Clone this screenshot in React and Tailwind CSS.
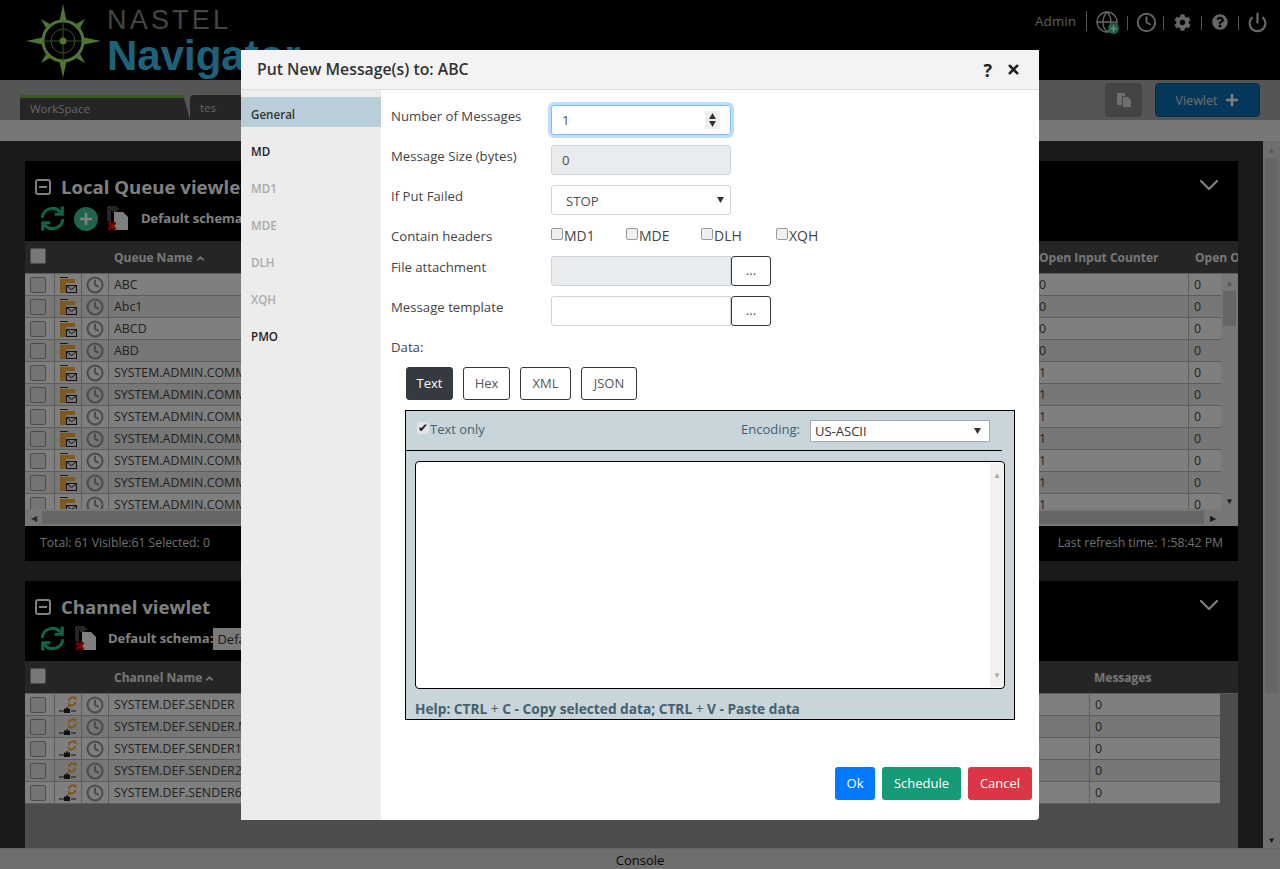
import React from "react";
import { Clock, Power, Globe, ChevronDown, ChevronUp, X, Plus } from "lucide-react";
import { FaCog, FaQuestionCircle, FaPlus } from "react-icons/fa";

const FONT = { fontFamily: '"Open Sans", "Noto Sans", sans-serif' };

const queueRows = [
  ["ABC", "0"],
  ["Abc1", "0"],
  ["ABCD", "0"],
  ["ABD", "0"],
  ["SYSTEM.ADMIN.COMMAND.EVENT", "1"],
  ["SYSTEM.ADMIN.COMMAND.QUEUE", "1"],
  ["SYSTEM.ADMIN.COMMAND.REPLY", "1"],
  ["SYSTEM.ADMIN.COMMAND.STATS", "1"],
  ["SYSTEM.ADMIN.COMMAND.TRACE", "1"],
  ["SYSTEM.ADMIN.COMMAND.ROUTE", "1"],
  ["SYSTEM.ADMIN.COMMAND.INPUT", "1"],
];

const channelRows = [
  "SYSTEM.DEF.SENDER",
  "SYSTEM.DEF.SENDER.MQ",
  "SYSTEM.DEF.SENDER1",
  "SYSTEM.DEF.SENDER2",
  "SYSTEM.DEF.SENDER6",
];

function Compass() {
  return (
    <svg width="78" height="76" viewBox="0 0 78 76">
      <g fill="#9ee86a">
        <path d="M38 1l5 24h-10z" />
        <path d="M38 75l-5-24h10z" />
        <path d="M1 38l24-5v10z" />
        <path d="M76 38l-24 5v-10z" />
        <path d="M16 16l9 5-4 4z" />
        <path d="M60 16l-5 9-4-4z" />
        <path d="M16 60l5-9 4 4z" />
        <path d="M60 60l-9-5 4-4z" />
      </g>
      <circle cx="38" cy="38" r="20" fill="#000" stroke="#9ee86a" strokeWidth="3" />
      <circle cx="38" cy="38" r="12" fill="none" stroke="#6aa84a" strokeWidth="1" />
      <path d="M38 18v40M18 38h40" stroke="#6aa84a" strokeWidth="1" />
      <circle cx="38" cy="38" r="3.5" fill="#9ee86a" />
    </svg>
  );
}

function RefreshIcon() {
  return (
    <svg width="25" height="25" viewBox="1 1 23 23" fill="none" stroke="#1fc98c" strokeWidth="2.8">
      <path d="M3 12a9.5 9.5 0 0 1 17-5" />
      <path d="M22 13a9.5 9.5 0 0 1-17 5" />
      <path d="M21.5 1.5v7h-7" />
      <path d="M3.5 23.5v-7h7" />
    </svg>
  );
}

function PlusCircle() {
  return (
    <div className="flex h-6 w-6 items-center justify-center rounded-full bg-[#44c79c]">
      <FaPlus className="text-[14px] text-white" />
    </div>
  );
}

function ClearFiles() {
  return (
    <svg width="22" height="25" viewBox="0 0 22 25">
      <path d="M1 1h9M1 1v14M3 3h9M3 3v13M5 5h5" stroke="#999" strokeWidth="1" fill="none" />
      <path d="M7 6h9l5 5v13H7z" fill="#fff" />
      <path d="M1.5 16.5l7 7M8.5 16.5l-7 7" stroke="#f00" strokeWidth="3" />
    </svg>
  );
}

function FolderMail() {
  return (
    <svg width="18" height="18" viewBox="0 0 18 18">
      <path d="M1 1h8v1H1z" fill="#333" />
      <path d="M1 3h15v4H7v10H1z" fill="#ffb13b" />
      <rect x="7.5" y="9.5" width="10" height="7" fill="#eee" stroke="#222" />
      <path d="M8 10l4.5 3.5L17 10" fill="none" stroke="#222" />
    </svg>
  );
}

function ChannelIcon() {
  return (
    <svg width="18" height="18" viewBox="0 0 18 18">
      <path d="M8 11v4M0 15h5M12 15h5" stroke="#222" strokeWidth="1.2" />
      <rect x="5" y="12.5" width="6" height="4.5" fill="#222" />
      <path d="M9.5 5a4 4 0 0 1 6.5-2.5M16.5 6a4 4 0 0 1-6.5 2.5" fill="none" stroke="#ffb13b" strokeWidth="2" />
      <path d="M13 0.5h4.5v4.5zM13.5 10.5H9V6z" fill="#ffb13b" />
    </svg>
  );
}

function RowClock() {
  return <Clock size={18} strokeWidth={2.8} className="text-[#999]" />;
}

function Check({ header }) {
  return (
    <div className={`h-4 w-4 rounded-[2px] border border-[#999] ${header ? "bg-[#f0f0f0]" : "bg-[#e8e8e8]"}`} />
  );
}

function TableHeader({ label, children }) {
  return (
    <div className="flex h-[33px] shrink-0 border-b border-[#bbb] bg-[#4a4a4a] text-[12px] font-bold text-[#eee]">
      <div className="w-[30px] pl-[5px] pt-[7px]">
        <Check header />
      </div>
      <div className="w-[54px]" />
      <div className="flex flex-1 items-start gap-[2px] pl-[5px] pt-[8px]">
        {label}
        <ChevronUp size={11} strokeWidth={3.5} className="mt-[4px]" />
      </div>
      {children}
    </div>
  );
}

function Row({ index, icon, name, children }) {
  return (
    <div className={`flex h-[22px] shrink-0 border-b border-[#bbb] text-[12.4px] text-[#444] ${index % 2 ? "bg-[#eee]" : "bg-white"}`}>
      <div className="flex w-[30px] items-center border-r border-[#bbb] pl-[5px]">
        <Check />
      </div>
      <div className="flex w-[27px] items-center justify-center border-r border-[#bbb]">{icon}</div>
      <div className="flex w-[27px] items-center justify-center border-r border-[#bbb]">
        <RowClock />
      </div>
      <div className="flex-1 truncate pl-[5px] leading-[22px]">{name}</div>
      {children}
    </div>
  );
}

function ViewletHead({ title, first }) {
  return (
    <div className="h-[80px] shrink-0 bg-black pl-[10px] pr-[13px]">
      <div className="flex h-[45px] items-center gap-[10px] pt-[7px]">
        <div className="flex h-4 w-4 items-center justify-center rounded-[3px] border-2 border-white">
          <div className="h-[2px] w-2 bg-white" />
        </div>
        <div className="text-[18.6px] font-bold leading-none text-white">{title}</div>
        <div className="flex-1" />
        <ChevronDown size={32} strokeWidth={1.6} className="-mt-[4px] text-white" />
      </div>
      <div className={`flex items-center pl-[5px] ${first ? "gap-[9px]" : "gap-[10px]"}`}>
        <RefreshIcon />
        {first && <PlusCircle />}
        <ClearFiles />
        <div className={`text-[13px] font-bold text-white ${first ? "ml-[3px]" : "ml-[1px]"}`}>Default schema:</div>
        {!first && <div className="-ml-[10px] h-[22px] w-[60px] bg-[#f4f4f4] pl-1 text-[13px] leading-[22px] text-[#333]">Default</div>}
      </div>
    </div>
  );
}

function Background() {
  return (
    <div className="flex h-full flex-col bg-[#343434]">
      {/* Top bar */}
      <div className="flex h-[80px] shrink-0 bg-black">
        <div className="pl-[25px] pt-[3px]">
          <Compass />
        </div>
        <div className="pl-[4px]" style={{ fontFamily: '"Liberation Sans", sans-serif' }}>
          <div className="pt-[7px] text-[27px] leading-[27px] tracking-[3.2px] text-[#8a8a8a]">NASTEL</div>
          <div className="text-[42px] font-bold leading-[44px] text-[#3cc4f5]">Navigator</div>
        </div>
        <div className="flex-1" />
        <div className="flex items-start gap-[10px] pr-[14px] pt-[11px] text-white">
          <span className="text-[13.5px] leading-[21px] text-[#bbb]">Admin</span>
          <div className="h-5 w-px bg-[#aaa]" />
          <div className="relative -mx-[2px] -mt-[1px] h-6 w-6">
            <Globe size={24} strokeWidth={1.3} className="text-[#ccc]" />
            <div className="absolute bottom-0 right-0 flex h-[11px] w-[11px] items-center justify-center rounded-full bg-[#39c98f]">
              <Plus size={9} strokeWidth={4} className="text-white" />
            </div>
          </div>
          <div className="mt-[5px] h-[14px] w-px bg-[#aaa]" />
          <Clock size={21} strokeWidth={2.2} className="-ml-[2px] -mr-[4px] mt-[1px] text-[#ccc]" />
          <div className="mt-[5px] h-[14px] w-px bg-[#aaa]" />
          <FaCog className="mt-[3px] text-[17px] text-[#ccc]" />
          <div className="mt-[5px] h-[14px] w-px bg-[#aaa]" />
          <FaQuestionCircle className="mt-[3px] text-[16px] text-[#ccc]" />
          <div className="mt-[5px] h-[14px] w-px bg-[#aaa]" />
          <Power size={21} strokeWidth={2.6} className="-mx-[2px] mt-[1px] text-[#ccc]" />
        </div>
      </div>

      {/* Tabs */}
      <div className="flex h-[40px] shrink-0 bg-[#aaa] pl-[20px] pr-[20px]">
        <div className="mt-[15px] flex h-[25px] w-[170px] items-center border-t-[3px] border-[#6fb83c] bg-[#4a4a4a] pl-[10px] text-[11.5px] text-[#ccc] [clip-path:polygon(0_0,96%_0,100%_100%,0_100%)]">
          WorkSpace
        </div>
        <div className="mt-[15px] flex h-[25px] w-[120px] items-center rounded-tl-[4px] bg-[#4a4a4a] pl-[10px] text-[11.5px] text-[#ccc]">
          tes
        </div>
        <div className="flex-1" />
        <div className="mt-[3px] flex h-[34px] w-[37px] items-center justify-center rounded-[4px] bg-[#888]">
          <svg width="16" height="16" viewBox="0 0 16 16">
            <path d="M1 1h8v3H6v9H1z" fill="#ddd" />
            <path d="M7 5h5l3 3v7H7z" fill="#ddd" />
          </svg>
        </div>
        <div className="ml-[13px] mt-[3px] flex h-[34px] w-[105px] items-center justify-center gap-2 rounded-[4px] border border-[#0a5c94] bg-[#0b6fb4] text-[12.5px] text-[#ddd]">
          <span className="pt-[3px]">Viewlet</span> <FaPlus className="text-[14px] text-white" />
        </div>
      </div>
      <div className="h-[21px] shrink-0 bg-[#eee]" />

      {/* Viewlets */}
      <div className="flex min-h-0 flex-1">
        <div className="flex min-w-0 flex-1 flex-col pl-[25px] pr-[25px] pt-[20px]">
          <div className="flex h-[400px] shrink-0 flex-col">
            <ViewletHead title="Local Queue viewlet" first />
            <TableHeader label="Queue Name">
              <div className="w-[156px] pl-[6px] pt-[8px]">Open Input Counter</div>
              <div className="w-[49px] overflow-hidden whitespace-nowrap pl-[6px] pt-[8px]">Open Output</div>
            </TableHeader>
            <div className="flex min-h-0 flex-1">
              <div className="flex min-w-0 flex-1 flex-col">
                <div className="h-[235px] overflow-hidden">
                  {queueRows.map(([name, count], i) => (
                    <Row key={name} index={i} icon={<FolderMail />} name={name}>
                      <div className="w-[156px] border-r border-[#bbb] pl-[6px] leading-[22px]">{count}</div>
                      <div className="w-[32px] pl-[5px] leading-[22px]">0</div>
                    </Row>
                  ))}
                </div>
                <div className="flex h-[17px] items-center bg-[#eee]">
                  <div className="w-[17px] text-center text-[8px] text-[#555]">◀</div>
                  <div className="h-[13px] flex-1 bg-[#ccc]" />
                  <div className="w-[17px] text-center text-[8px] text-[#333]">▶</div>
                </div>
              </div>
              <div className="flex w-[17px] flex-col bg-[#eee]">
                <div className="h-[17px] text-center text-[8px] leading-[17px] text-[#aaa]">▲</div>
                <div className="mx-[2px] h-[35px] bg-[#ccc]" />
                <div className="flex-1" />
                <div className="mb-[17px] h-[17px] text-center text-[8px] leading-[17px] text-[#333]">▼</div>
              </div>
            </div>
            <div className="flex h-[35px] shrink-0 items-center justify-between bg-black pl-[15px] pr-[15px] text-[12.2px] text-[#ddd]">
              <div>Total: 61 Visible:61 Selected: 0</div>
              <div>Last refresh time: 1:58:42 PM</div>
            </div>
          </div>

          <div className="mt-[20px] flex min-h-0 flex-1 flex-col bg-[#999]">
            <ViewletHead title="Channel viewlet" />
            <TableHeader label="Channel Name">
              <div className="w-[131px] pl-[5px] pt-[8px]">Messages</div>
              <div className="w-[18px]" />
            </TableHeader>
            <div className="w-[1195px]">
              {channelRows.map((name, i) => (
                <Row key={name} index={i} icon={<ChannelIcon />} name={name}>
                  <div className="w-[131px] border-l border-[#bbb] pl-[5px] leading-[22px]">0</div>
                </Row>
              ))}
            </div>
          </div>
        </div>
        <div className="flex w-[17px] shrink-0 flex-col bg-[#ddd]">
          <div className="h-[17px] text-center text-[8px] leading-[17px] text-[#aaa]">▲</div>
          <div className="mx-[2px] h-[535px] bg-[#ccc]" />
          <div className="flex-1" />
          <div className="h-[17px] text-center text-[8px] leading-[17px] text-[#333]">▼</div>
        </div>
      </div>

      <div className="h-[21px] shrink-0 border-t border-[#ccc] bg-[#ddd] text-center text-[13px] leading-[22px] text-[#111]">
        Console
      </div>
    </div>
  );
}

function SideItem({ label, active, disabled }) {
  let tone = "text-[#222]";
  if (active) tone = "bg-[#b9ced8] text-[#333]";
  if (disabled) tone = "text-[#aaa]";
  return (
    <div className={`flex h-[30px] items-center pl-[10px] pt-[5px] text-[11.6px] font-semibold ${tone}`}>{label}</div>
  );
}

function FormRow({ label, height = "h-[40px]", flat, children }) {
  return (
    <div className={`flex ${height} text-[13.2px] text-[#444]`}>
      <div className={`w-[160px] shrink-0 ${flat ? "" : "pt-[2px]"}`}>{label}</div>
      {children}
    </div>
  );
}

function Triangle({ className }) {
  return (
    <svg width="7" height="6" viewBox="0 0 7 6" className={className}>
      <path d="M0 0h7L3.5 6z" fill="#333" />
    </svg>
  );
}

function ModeButton({ label, active, width }) {
  return (
    <div
      className={`flex h-[33px] items-center justify-center rounded-[3px] border border-[#343a40] text-[13px] ${width} ${
        active ? "bg-[#343a40] text-white" : "bg-white text-[#555]"
      }`}
    >
      {label}
    </div>
  );
}

function Modal() {
  return (
    <div className="absolute left-[241px] top-[50px] flex h-[770px] w-[798px] flex-col rounded-b-[4px] bg-white text-[#333]">
      <div className="flex h-[40px] shrink-0 items-center border-b border-[#ddd] bg-[#f3f3f3] pl-[16px] pr-[18px]">
        <div className="flex-1 text-[15.8px] font-semibold text-[#333]">Put New Message(s) to: ABC</div>
        <div className="mr-[14px] text-[18px] font-bold leading-none text-[#222]">?</div>
        <X size={15} strokeWidth={4} className="text-[#222]" />
      </div>
      <div className="flex min-h-0 flex-1">
        <div className="flex w-[140px] shrink-0 flex-col gap-[7px] bg-[#ececec] pt-[7px]">
          <SideItem label="General" active />
          <SideItem label="MD" />
          <SideItem label="MD1" disabled />
          <SideItem label="MDE" disabled />
          <SideItem label="DLH" disabled />
          <SideItem label="XQH" disabled />
          <SideItem label="PMO" />
        </div>

        <div className="flex min-w-0 flex-1 flex-col pl-[10px] pt-[15px] pr-[7px]">
          <FormRow label="Number of Messages">
            <div className="flex h-[30px] w-[180px] items-center justify-between rounded-[3px] border border-[#80bdff] pl-[10px] pr-[10px] text-[#495057] shadow-[0_0_0_3px_rgba(0,123,255,0.25)]">
              <span className="pt-[1px]">1</span>
              <div className="flex h-[18px] w-[15px] flex-col items-center justify-center gap-[2px] bg-[#f0f0f0]">
                <Triangle className="rotate-180" />
                <Triangle />
              </div>
            </div>
          </FormRow>
          <FormRow label="Message Size (bytes)">
            <div className="flex h-[30px] w-[180px] items-center rounded-[3px] border border-[#ced4da] bg-[#e9ecef] pl-[10px] pt-[1px] text-[#495057]">0</div>
          </FormRow>
          <FormRow label="If Put Failed" height="h-[42px]">
            <div className="flex h-[30px] w-[180px] items-center justify-between rounded-[3px] border border-[#ced4da] pl-[14px] pr-[6px] text-[#495057]">
              <span className="pt-[3px]">STOP</span>
              <Triangle />
            </div>
          </FormRow>
          <FormRow label="Contain headers" height="h-[29px]" flat>
            {["MD1", "MDE", "DLH", "XQH"].map((h) => (
              <div key={h} className="flex h-[20px] w-[75px] items-start">
                <div className="mt-[1px] h-3 w-3 shrink-0 rounded-[2px] border border-[#999] bg-[#f0f0f0]" />
                <span className="pl-[1px] text-[14px] leading-[18px]">{h}</span>
              </div>
            ))}
          </FormRow>
          <FormRow label="File attachment">
            <div className="h-[30px] w-[180px] rounded-l-[3px] border border-[#ced4da] bg-[#e9ecef]" />
            <div className="flex h-[30px] w-[40px] items-center justify-center rounded-[3px] border border-[#343a40] text-[#555]">...</div>
          </FormRow>
          <FormRow label="Message template">
            <div className="h-[30px] w-[180px] rounded-l-[3px] border border-[#ced4da]" />
            <div className="flex h-[30px] w-[40px] items-center justify-center rounded-[3px] border border-[#343a40] text-[#555]">...</div>
          </FormRow>
          <div className="h-[31px] pt-[2px] text-[13.2px] text-[#444]">Data:</div>

          <div className="flex gap-[10px] pl-[15px]">
            <ModeButton label="Text" active width="w-[47px]" />
            <ModeButton label="Hex" width="w-[47px]" />
            <ModeButton label="XML" width="w-[51px]" />
            <ModeButton label="JSON" width="w-[56px]" />
          </div>

          <div className="ml-[14px] mt-[10px] flex h-[310px] w-[610px] flex-col border border-black bg-[#c8d6db] px-[9px]">
            <div className="-ml-[9px] mr-[3px] flex h-[40px] shrink-0 items-start justify-between border-b border-black pl-[11px] pr-[12px] pt-[9px] text-[13px] text-[#45606e]">
              <div className="flex items-center">
                <div className="-mt-[3px] flex h-3 w-3 items-center justify-center rounded-[2px] bg-[#e4e4e4] text-[12px] leading-none text-[#222]">✔</div>
                <span className="pl-[1px] leading-[18px]">Text only</span>
              </div>
              <div className="flex items-start gap-[10px]">
                <span className="leading-[18px]">Encoding:</span>
                <div className="flex h-[22px] w-[180px] items-center justify-between border border-[#aaa] bg-white pl-[4px] pr-[8px] text-[#333]">
                  <span className="pt-[1px]">US-ASCII</span>
                  <Triangle />
                </div>
              </div>
            </div>
            <div className="mt-[10px] flex h-[228px] shrink-0 justify-end rounded-[4px] border border-black bg-white">
              <div className="my-[1px] flex w-[14px] flex-col justify-between rounded-r-[4px] bg-[#f1f1f1] py-[6px] text-center text-[8px] text-[#aaa]">
                <span>▲</span>
                <span>▼</span>
              </div>
            </div>
            <div className="whitespace-nowrap pt-[12px] text-[13.7px] font-bold leading-[16px] text-[#45606e]">
              Help: CTRL <span className="font-normal">+</span> C - Copy selected data; CTRL <span className="font-normal">+</span> V - Paste data
            </div>
          </div>

          <div className="flex flex-1 items-start justify-end gap-[7px] pt-[47px] text-[13px] text-white">
            <div className="flex h-[33px] w-[40px] items-center justify-center rounded-[3px] bg-[#007bff] pt-[1px]">Ok</div>
            <div className="flex h-[33px] w-[79px] items-center justify-center rounded-[3px] bg-[#169b78] pt-[1px]">Schedule</div>
            <div className="flex h-[33px] w-[64px] items-center justify-center rounded-[3px] bg-[#dc3545] pt-[1px]">Cancel</div>
          </div>
        </div>
      </div>
    </div>
  );
}

export default function App() {
  return (
    <div className="relative h-[869px] w-full overflow-hidden" style={FONT}>
      <Background />
      <div className="absolute inset-0 bg-black/50" />
      <Modal />
    </div>
  );
}
